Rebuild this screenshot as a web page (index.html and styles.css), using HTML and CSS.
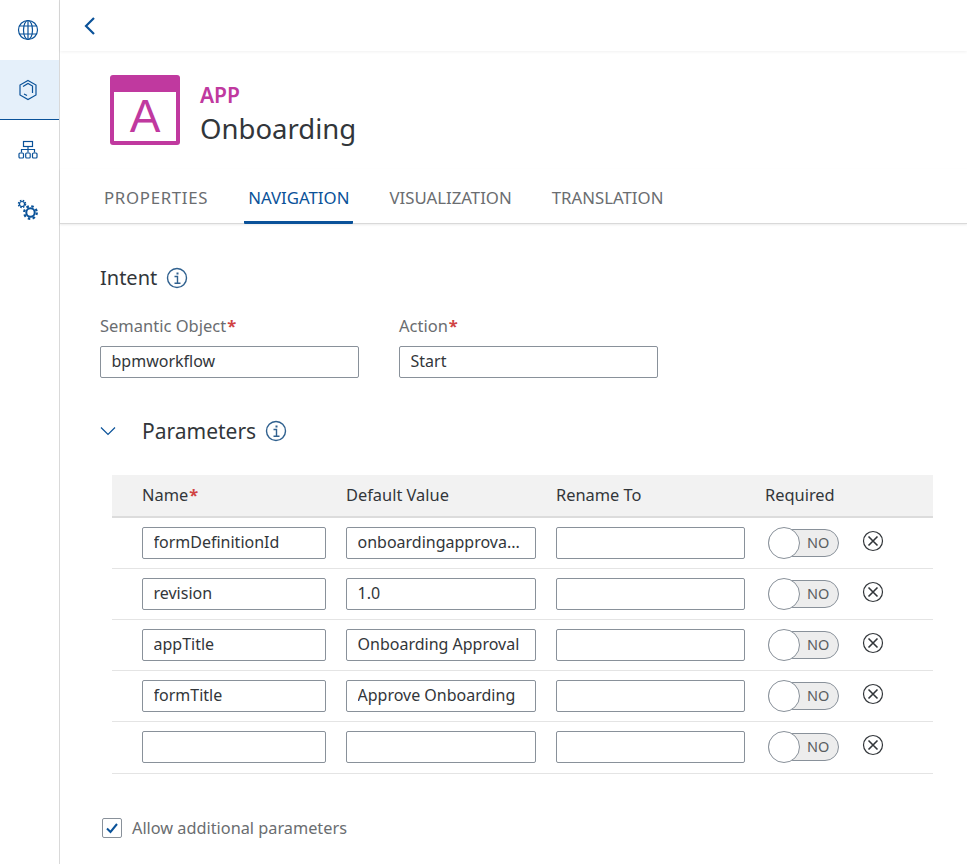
FILE: index.html
```html
<!DOCTYPE html>
<html>
<head>
  <meta charset="utf-8">
  <title>Onboarding</title>
  <link rel="stylesheet" href="styles.css">
</head>
<body>
  <div class="shell">
    <!-- SIDE NAV -->
    <nav class="sidenav">
      <a class="nav-item">
        <svg width="22" height="22" viewBox="0 0 22 22" class="nav-icon"><circle cx="11" cy="11" r="9.500"/><ellipse cx="11" cy="11" rx="4.500" ry="9.500"/><path d="M11 1.500v19M2.400 7h17.200M2.400 15h17.200"/></svg>
      </a>
      <a class="nav-item active">
        <svg width="20" height="22" viewBox="0 0 20 22" class="nav-icon"><path d="M10 1.500l8 4.500v10l-8 4.500-8-4.500V6z"/><path d="M5 7.500l5-3 4.500 2.500v7M6 15l3 1.500"/></svg>
      </a>
      <a class="nav-item">
        <svg width="20" height="20" viewBox="0 0 20 20" class="nav-icon"><rect x="5.500" y="1.500" width="9" height="5"/><path d="M10 6.500v6M3.500 12.500v-3h13v3"/><rect x="1" y="13" width="4.500" height="5" rx="1"/><rect x="7.700" y="13" width="4.500" height="5" rx="1"/><rect x="14.500" y="13" width="4.500" height="5" rx="1"/></svg>
      </a>
      <a class="nav-item">
        <svg width="22" height="22" viewBox="0 0 22 22" class="nav-icon"><circle cx="5" cy="5" r="2.500"/><circle cx="5" cy="5" r="3.500" stroke-dasharray="1.500 1.300" stroke-width="1.500"/><circle cx="13.500" cy="13.500" r="4.200" stroke-width="2"/><circle cx="13.500" cy="13.500" r="6.300" stroke-width="2.200" stroke-dasharray="2.500 2.450"/></svg>
      </a>
    </nav>

    <main class="content">
      <div class="topbar">
        <svg width="14" height="20" viewBox="0 0 14 20" class="back"><path d="M11 2L3 10l8 8"/></svg>
      </div>

      <!-- HEADER -->
      <header class="app-header">
        <div class="app-icon">
          <div class="app-icon-body">A</div>
        </div>
        <div class="app-title">
          <div class="app-type">APP</div>
          <div class="app-name">Onboarding</div>
        </div>
      </header>

      <!-- TABS -->
      <div class="tabs">
        <a class="tab">PROPERTIES</a>
        <a class="tab selected">NAVIGATION</a>
        <a class="tab">VISUALIZATION</a>
        <a class="tab">TRANSLATION</a>
      </div>

      <section class="form">
        <h2 class="section-title">Intent <svg width="22" height="22" viewBox="0 0 22 22" class="info"><circle cx="11" cy="11" r="9.500"/><path d="M8.500 9.500H11.500V16M8.500 16.200h6"/><path d="M10.500 5.500h2v2h-2z" class="dot"/></svg></h2>

        <div class="intent-row">
          <div class="field">
            <label>Semantic Object<span class="req">*</span></label>
            <input type="text" value="bpmworkflow">
          </div>
          <div class="field">
            <label>Action<span class="req">*</span></label>
            <input type="text" value="Start">
          </div>
        </div>

        <div class="params-head">
          <svg width="16" height="10" viewBox="0 0 16 10" class="chevron"><path d="M1 1.500l7 7 7-7"/></svg>
          <h2 class="section-title">Parameters <svg width="22" height="22" viewBox="0 0 22 22" class="info"><circle cx="11" cy="11" r="9.500"/><path d="M8.500 9.500H11.500V16M8.500 16.200h6"/><path d="M10.500 5.500h2v2h-2z" class="dot"/></svg></h2>
        </div>

        <!-- PARAMETER TABLE -->
        <div class="params">
          <div class="row head">
            <div>Name<span class="req">*</span></div>
            <div>Default Value</div>
            <div>Rename To</div>
            <div>Required</div>
            <div></div>
          </div>

          <div class="row">
            <input type="text" value="formDefinitionId">
            <input type="text" value="onboardingapprova...">
            <input type="text" value="">
            <div class="toggle"><span class="knob"></span><span class="toggle-text">NO</span></div>
            <svg width="22" height="22" viewBox="0 0 22 22" class="remove"><circle cx="11" cy="11" r="9.500"/><path d="M6.500 6.500l9 9M15.500 6.500l-9 9"/></svg>
          </div>
          <div class="row">
            <input type="text" value="revision">
            <input type="text" value="1.0">
            <input type="text" value="">
            <div class="toggle"><span class="knob"></span><span class="toggle-text">NO</span></div>
            <svg width="22" height="22" viewBox="0 0 22 22" class="remove"><circle cx="11" cy="11" r="9.500"/><path d="M6.500 6.500l9 9M15.500 6.500l-9 9"/></svg>
          </div>
          <div class="row">
            <input type="text" value="appTitle">
            <input type="text" value="Onboarding Approval">
            <input type="text" value="">
            <div class="toggle"><span class="knob"></span><span class="toggle-text">NO</span></div>
            <svg width="22" height="22" viewBox="0 0 22 22" class="remove"><circle cx="11" cy="11" r="9.500"/><path d="M6.500 6.500l9 9M15.500 6.500l-9 9"/></svg>
          </div>
          <div class="row">
            <input type="text" value="formTitle">
            <input type="text" value="Approve Onboarding">
            <input type="text" value="">
            <div class="toggle"><span class="knob"></span><span class="toggle-text">NO</span></div>
            <svg width="22" height="22" viewBox="0 0 22 22" class="remove"><circle cx="11" cy="11" r="9.500"/><path d="M6.500 6.500l9 9M15.500 6.500l-9 9"/></svg>
          </div>
          <div class="row last">
            <input type="text" value="">
            <input type="text" value="">
            <input type="text" value="">
            <div class="toggle"><span class="knob"></span><span class="toggle-text">NO</span></div>
            <svg width="22" height="22" viewBox="0 0 22 22" class="remove"><circle cx="11" cy="11" r="9.500"/><path d="M6.500 6.500l9 9M15.500 6.500l-9 9"/></svg>
          </div>
        </div>

        <div class="allow">
          <span class="checkbox"><svg width="14" height="12" viewBox="0 0 14 12"><path d="M2 6.500l3.500 3.500L12 2"/></svg></span>
          <span>Allow additional parameters</span>
        </div>
      </section>
    </main>
  </div>
</body>
</html>
```

FILE: styles.css
```css
* {
  box-sizing: border-box;
}
html, body {
  height: 100%;
}
body {
  margin: 0;
  font-family: "Noto Sans", "Open Sans", sans-serif;
  font-size: 16px;
  color: #32363a;
  background: #fff;
  overflow: hidden;
}
.shell {
  display: flex;
  height: 864px;
}

/* side nav */
.sidenav {
  width: 60px;
  flex: none;
  border-right: 1px solid #d9d9d9;
}
.nav-item {
  display: flex;
  align-items: center;
  justify-content: center;
  height: 60px;
  padding-right: 3px;
}
.nav-item.active {
  background: #e5f0fa;
  border-bottom: 1px solid #0a5299;
}
.nav-icon {
  fill: none;
  stroke: #0a5299;
  stroke-width: 1.200;
}

.content {
  flex: 1;
  min-width: 0;
}
.topbar {
  height: 51px;
  padding: 16px 0 0 23px;
  box-shadow: 0 1px 3px rgba(0, 0, 0, 0.06);
}
.back {
  fill: none;
  stroke: #0a5299;
  stroke-width: 2.200;
}

/* header */
.app-header {
  display: flex;
  align-items: flex-start;
  gap: 20px;
  height: 94px;
  padding: 24px 0 0 50px;
}
.app-icon {
  width: 70px;
  height: 70px;
  padding: 17px 4px 4px;
  background: #c0399f;
  border-radius: 3px;
}
.app-icon-body {
  height: 100%;
  background: #fff;
  color: #c0399f;
  font-family: "Liberation Sans", sans-serif;
  font-size: 46px;
  line-height: 49px;
  text-align: center;
}
.app-type {
  color: #c0399f;
  font-size: 21px;
  font-weight: 600;
  line-height: 26px;
  margin-top: 7px;
}
.app-name {
  font-size: 27.500px;
  line-height: 42px;
}

/* tabs */
.tabs {
  display: flex;
  gap: 40px;
  height: 55px;
  margin-top: 24px;
  padding-left: 44px;
  border-bottom: 1px solid #d9d9d9;
  box-shadow: 0 1px 2px rgba(0, 0, 0, 0.08);
}
.tab {
  height: 55px;
  padding: 17px 0 0;
  color: #6a6d70;
  font-size: 16.800px;
  line-height: 24px;
}
.tab:first-child {
  letter-spacing: 0.700px;
}
.tab.selected {
  color: #0a5299;
  padding: 17px 4px 0;
  margin: 0 -4px;
  border-bottom: 3px solid #0a5299;
  border-radius: 0 0 1px 1px;
}

/* form */
.form {
  padding: 40px 34px 0 40px;
}
.section-title {
  display: flex;
  align-items: center;
  gap: 9px;
  margin: 0;
  font-size: 20px;
  font-weight: 400;
  line-height: 28px;
}
.params-head .section-title {
  font-size: 21px;
}
.info {
  fill: none;
  stroke: #30618f;
  stroke-width: 1.400;
}
.info .dot {
  fill: #30618f;
  stroke: none;
}
.intent-row {
  display: flex;
  gap: 40px;
  margin-top: 23px;
}
.field {
  display: flex;
  flex-direction: column;
  width: 259px;
  gap: 9px;
}
.field label {
  color: #6a6d70;
  font-size: 16.500px;
  line-height: 22px;
}
.req {
  color: #d04343;
  font-weight: 700;
  margin-left: 1px;
}
input[type="text"] {
  width: 100%;
  height: 32px;
  padding: 0 10.500px 2px;
  border: 1px solid #89919a;
  border-radius: 2px;
  background: #fff;
  color: #32363a;
  font-family: inherit;
  font-size: 16px;
}

.params-head {
  display: flex;
  align-items: center;
  gap: 26px;
  margin-top: 39px;
}
.chevron {
  fill: none;
  stroke: #0a5299;
  stroke-width: 1.200;
}

/* parameter table */
.params {
  margin: 30px 0 0 12px;
}
.row {
  display: grid;
  grid-template-columns: 184px 190px 189px 71px 22px;
  column-gap: 20px;
  align-items: center;
  height: 51px;
  padding-left: 30px;
  border-bottom: 1px solid #e4e4e4;
}
.row.last {
  height: 52px;
  padding-bottom: 1px;
}
.row.head {
  height: 43px;
  padding-bottom: 2px;
  background: #f2f2f2;
  border-bottom: 2px solid #dcdcdc;
  color: #32363a;
  font-size: 16.400px;
}
.toggle {
  display: flex;
  align-items: center;
  position: relative;
  width: 71px;
  height: 28px;
  margin-left: 3px;
  border: 1px solid #89919a;
  border-radius: 14px;
  background: #ededed;
}
.knob {
  position: absolute;
  left: -1px;
  top: -3px;
  width: 32px;
  height: 32px;
  border: 1px solid #89919a;
  border-radius: 50%;
  background: #fff;
}
.toggle-text {
  margin: 0 0 2px 38px;
  color: #5a5d60;
  font-size: 14.500px;
}
.remove {
  fill: none;
  stroke: #32363a;
  stroke-width: 1.200;
  margin-left: 6px;
  margin-top: -4px;
}
.row .remove path {
  stroke-width: 1.600;
}

.allow {
  display: flex;
  align-items: center;
  gap: 10px;
  margin: 43px 0 0 2px;
  color: #6a6d70;
  font-size: 16.300px;
}
.checkbox {
  display: flex;
  align-items: center;
  justify-content: center;
  width: 20px;
  height: 20px;
  border: 1px solid #89919a;
  border-radius: 2px;
}
.checkbox svg {
  fill: none;
  stroke: #0a5299;
  stroke-width: 2;
}
```
